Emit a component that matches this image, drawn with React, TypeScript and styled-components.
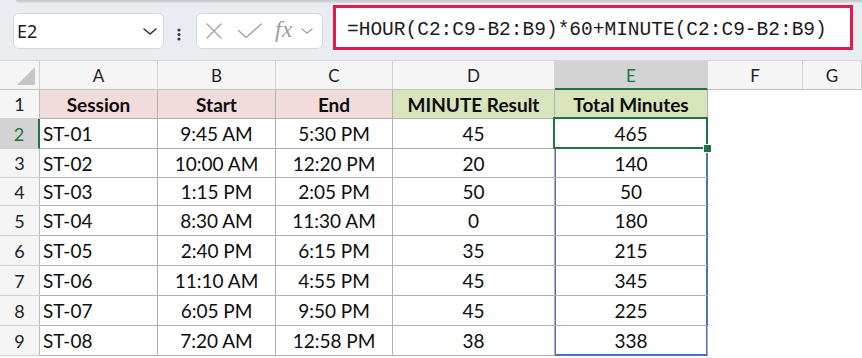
import React from "react";
import styled, { createGlobalStyle, css } from "styled-components";

const GlobalStyle = createGlobalStyle`
  html, body { margin: 0; padding: 0; background: #ffffff; }
  body { font-family: Lato, "Noto Sans", sans-serif; }
`;

const GREEN = "#217346";
const BLUE = "#4a72c0";

const Window = styled.div`
  width: 862px;
  height: 358px;
  overflow: hidden;
  background: #ffffff;
`;

const FormulaArea = styled.div`
  height: 60px;
  background: #e9edf2;
  display: flex;
  flex-direction: column;
`;

const TopShade = styled.div`
  height: 3px;
  margin-left: 16px;
  background: linear-gradient(#c2c5ca, #dde0e5);
  border-bottom-left-radius: 3px;
`;

const Bar = styled.div`
  flex: 1;
  display: flex;
  align-items: flex-start;
  padding-left: 13px;
`;

const BoxBase = css`
  box-sizing: border-box;
  height: 36px;
  margin-top: 10px;
  background: #ffffff;
  border: 1px solid #d4d8dd;
  border-radius: 6px;
  display: flex;
  align-items: center;
`;

const NameBox = styled.div`
  ${BoxBase};
  width: 151px;
  justify-content: space-between;
  padding: 0 6px 0 3px;
  font-family: "Noto Sans", sans-serif;
  font-size: 18px;
  color: #1b1b1b;
`;

const DotsWrap = styled.div`
  margin: 25px 0 0 13px;
  width: 4px;
  display: flex;
`;

const FxBox = styled.div`
  ${BoxBase};
  width: 127px;
  margin-left: 15px;
  padding-left: 8px;
  gap: 0;
`;

const FxText = styled.span`
  font-family: "Liberation Serif", serif;
  font-style: italic;
  font-size: 23px;
  color: #9b9b9b;
  margin: -3px 0 0 12px;
  letter-spacing: 0.5px;
`;

const FormulaBox = styled.div`
  box-sizing: border-box;
  width: 520px;
  height: 45px;
  margin: 2px 0 0 10px;
  border: 3px solid #e21b4b;
  background: #ffffff;
  display: flex;
  align-items: center;
  padding: 5px 0 0 11px;
  font-family: "Liberation Mono", monospace;
  font-size: 19.5px;
  color: #1a1a1a;
  white-space: nowrap;
`;

const Sheet = styled.div`
  display: grid;
  grid-template-columns: 40px 118px 118px 117px 162px 153px 95px 1fr;
  grid-template-rows: 30px 29px 30px 29px 28px 30px 30px 30px 30px 30px;
`;

const Corner = styled.div`
  box-sizing: border-box;
  background: #f5f5f5;
  border-right: 1px solid #cfcfcf;
  border-bottom: 1px solid #c3c3c3;
  border-top: 1px solid #d6d6d6;
  display: flex;
  justify-content: flex-end;
  align-items: flex-end;
  padding: 0 4px 4px 0;
`;

const Triangle = styled.div`
  width: 18px;
  height: 18px;
  background: #c5c5c5;
  clip-path: polygon(100% 0, 100% 100%, 0 100%);
`;

const ColHeader = styled.div<{ $selected?: boolean }>`
  box-sizing: border-box;
  background: ${(p) => (p.$selected ? "#d3d3d3" : "#f5f5f5")};
  color: ${(p) => (p.$selected ? GREEN : "#222222")};
  border-top: 1px solid #d6d6d6;
  border-right: 1px solid #d3d3d3;
  border-bottom: ${(p) => (p.$selected ? `2px solid ${GREEN}` : "1px solid #c3c3c3")};
  font-size: 17px;
  display: flex;
  align-items: center;
  justify-content: center;
  padding-top: ${(p) => (p.$selected ? "1px" : "0")};
`;

const RowHeader = styled.div<{ $selected?: boolean }>`
  box-sizing: border-box;
  background: ${(p) => (p.$selected ? "#d3d3d3" : "#f5f5f5")};
  color: ${(p) => (p.$selected ? GREEN : "#222222")};
  border-right: ${(p) => (p.$selected ? `2px solid ${GREEN}` : "1px solid #bdbdbd")};
  border-bottom: 1px solid #d0d0d0;
  font-size: 18px;
  display: flex;
  align-items: center;
  justify-content: center;
`;

type Fill = "pink" | "green" | undefined;

const Cell = styled.div<{
  $fill?: Fill;
  $bold?: boolean;
  $left?: boolean;
  $table?: boolean;
  $spill?: boolean;
  $spillEnd?: boolean;
  $active?: boolean;
}>`
  box-sizing: border-box;
  position: relative;
  background: ${(p) =>
    p.$fill === "pink" ? "#f2dcdb" : p.$fill === "green" ? "#d8e4bc" : "#ffffff"};
  font-size: 19px;
  font-weight: ${(p) => (p.$bold ? 700 : 400)};
  color: #0d0d0d;
  display: flex;
  align-items: center;
  justify-content: ${(p) => (p.$left ? "flex-start" : "center")};
  padding-left: ${(p) => (p.$left ? "3px" : "0")};
  white-space: nowrap;
  ${(p) =>
    p.$table &&
    css`
      border-right: 1px solid #b1b1b1;
      border-bottom: 1px solid #b1b1b1;
    `}
  ${(p) =>
    p.$spill &&
    css`
      border-right: 1px solid ${BLUE};
      box-shadow: inset 1px 0 0 ${BLUE}, inset -1px 0 0 ${BLUE};
    `}
  ${(p) =>
    p.$spillEnd &&
    css`
      border-bottom: 1px solid ${BLUE};
      box-shadow: inset 1px 0 0 ${BLUE}, inset -1px 0 0 ${BLUE}, inset 0 -1px 0 ${BLUE};
    `}
  ${(p) =>
    p.$active &&
    css`
      z-index: 2;
      &::after {
        content: "";
        position: absolute;
        top: -2px;
        left: -2px;
        right: -1px;
        bottom: -1px;
        border: 2px solid ${GREEN};
        pointer-events: none;
      }
      &::before {
        content: "";
        position: absolute;
        right: -4px;
        bottom: -4px;
        width: 7px;
        height: 7px;
        background: ${GREEN};
        box-shadow: 0 0 0 1px #ffffff;
        z-index: 3;
      }
    `}
`;

const Chevron = ({ color, size }: { color: string; size: number }) => (
  <svg width={size} height={size * 0.5} viewBox="0 0 14 7" fill="none">
    <path d="M1 1 L7 6 L13 1" stroke={color} strokeWidth="1.5" strokeLinecap="round" strokeLinejoin="round" />
  </svg>
);

const Dots = () => (
  <svg width="4" height="13" viewBox="0 0 4 13">
    <circle cx="2" cy="2" r="1.6" fill="#3a3a3a" />
    <circle cx="2" cy="6.5" r="1.6" fill="#3a3a3a" />
    <circle cx="2" cy="11" r="1.6" fill="#3a3a3a" />
  </svg>
);

const CancelIcon = () => (
  <svg width="18" height="16" viewBox="0 0 18 16" fill="none">
    <path d="M2 1 L16 15 M16 1 L2 15" stroke="#a3a3a3" strokeWidth="1.4" strokeLinecap="round" />
  </svg>
);

const CheckIcon = () => (
  <svg width="26" height="16" viewBox="0 0 26 16" fill="none" style={{ marginLeft: 14 }}>
    <path d="M1.5 7.5 L9 14.5 L24.5 1" stroke="#a3a3a3" strokeWidth="1.4" strokeLinecap="round" strokeLinejoin="round" />
  </svg>
);

const columns = ["A", "B", "C", "D", "E", "F", "G"];

type Row = [string, string, string, string, string];
const headerRow: Row = ["Session", "Start", "End", "MINUTE Result", "Total Minutes"];
const data: Row[] = [
  ["ST-01", "9:45 AM", "5:30 PM", "45", "465"],
  ["ST-02", "10:00 AM", "12:20 PM", "20", "140"],
  ["ST-03", "1:15 PM", "2:05 PM", "50", "50"],
  ["ST-04", "8:30 AM", "11:30 AM", "0", "180"],
  ["ST-05", "2:40 PM", "6:15 PM", "35", "215"],
  ["ST-06", "11:10 AM", "4:55 PM", "45", "345"],
  ["ST-07", "6:05 PM", "9:50 PM", "45", "225"],
  ["ST-08", "7:20 AM", "12:58 PM", "38", "338"],
];

export default function App() {
  return (
    <Window>
      <GlobalStyle />
      <FormulaArea>
        <TopShade />
        <Bar>
          <NameBox>
            <span>E2</span>
            <Chevron color="#2b2b2b" size={14} />
          </NameBox>
          <DotsWrap>
            <Dots />
          </DotsWrap>
          <FxBox>
            <CancelIcon />
            <CheckIcon />
            <FxText>fx</FxText>
            <span style={{ marginLeft: 8, display: "flex" }}>
              <Chevron color="#a3a3a3" size={12} />
            </span>
          </FxBox>
          <FormulaBox>=HOUR(C2:C9-B2:B9)*60+MINUTE(C2:C9-B2:B9)</FormulaBox>
        </Bar>
      </FormulaArea>
      <Sheet>
        <Corner>
          <Triangle />
        </Corner>
        {columns.map((c) => (
          <ColHeader key={c} $selected={c === "E"}>
            {c}
          </ColHeader>
        ))}

        <RowHeader>1</RowHeader>
        {headerRow.map((h, i) => (
          <Cell key={h} $table $bold $fill={i < 3 ? "pink" : "green"}>
            {h}
          </Cell>
        ))}
        <Cell />
        <Cell />

        {data.map((r, ri) => {
          const rowNum = ri + 2;
          return (
            <React.Fragment key={r[0]}>
              <RowHeader $selected={rowNum === 2}>{rowNum}</RowHeader>
              {r.map((v, ci) => (
                <Cell
                  key={ci}
                  $table
                  $left={ci === 0}
                  $active={ci === 4 && rowNum === 2}
                  $spill={ci === 4 && rowNum > 2 && rowNum < 9}
                  $spillEnd={ci === 4 && rowNum === 9}
                >
                  {v}
                </Cell>
              ))}
              <Cell />
              <Cell />
            </React.Fragment>
          );
        })}
      </Sheet>
    </Window>
  );
}
